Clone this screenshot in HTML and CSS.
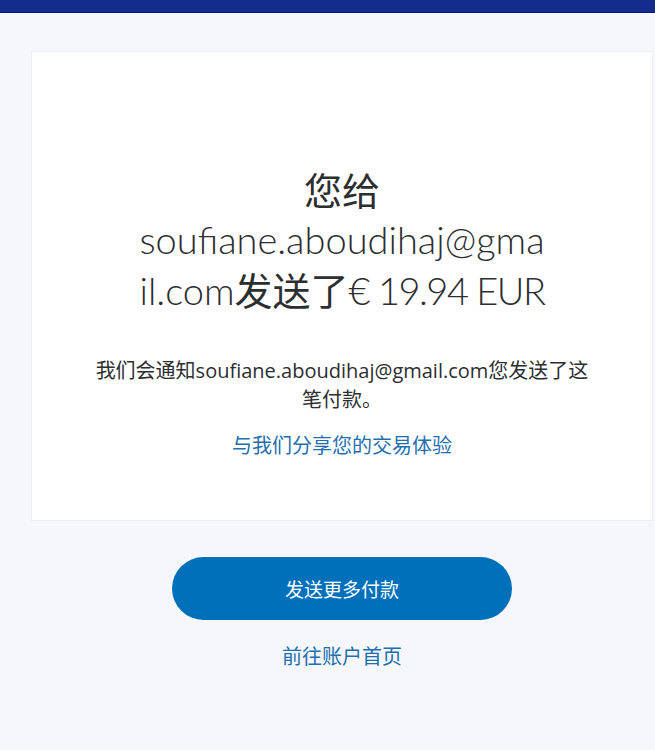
FILE: index.html
```html
<!DOCTYPE html>
<html lang="zh-CN">
<head>
<meta charset="utf-8">
<title>付款已发送</title>
<link rel="stylesheet" href="styles.css">
</head>
<body>
<header class="topbar"></header>
<main class="page">
  <section class="card">
    <h1 class="title"><span class="cjk">您给</span>soufiane.aboudihaj@gmail.com<span class="cjk">发送了</span><span class="amount">€ 19.94 EUR</span></h1>
    <p class="notice">我们会通知soufiane.aboudihaj@gmail.com您发送了这笔付款。</p>
    <a class="share" href="#">与我们分享您的交易体验</a>
  </section>
  <div class="actions">
    <a class="btn" href="#">发送更多付款</a>
    <a class="home" href="#">前往账户首页</a>
  </div>
</main>
</body>
</html>
```
FILE: styles.css
```css
* { box-sizing: border-box; }
html, body { margin: 0; padding: 0; }
body {
  background: #f5f7fa;
  font-family: "Open Sans", "Noto Sans CJK SC", sans-serif;
  color: #2c2e2f;
  width: 655px;
  height: 750px;
  overflow: hidden;
}
.topbar {
  height: 13px;
  background: #142c8e;
  border-bottom: 1px solid #0d1f6a;
}
.page {
  padding: 38px 2px 0 31px;
}
.card {
  background: #ffffff;
  border: 1px solid #eceef0;
  height: 470px;
  display: flex;
  flex-direction: column;
  align-items: center;
  padding-top: 112px;
}
.title {
  margin: 0;
  width: 409px;
  font-family: "Lato", "Noto Sans CJK SC", sans-serif;
  font-size: 38px;
  line-height: 49px;
  font-weight: 300;
  text-align: center;
  overflow-wrap: anywhere;
  color: #2c2e2f;
}
.cjk {
  font-family: "Noto Sans CJK SC", sans-serif;
  font-weight: 400;
}
.amount {
  letter-spacing: -1.5px;
}
.notice {
  margin: 41px 0 0;
  width: 496px;
  font-size: 20px;
  line-height: 29px;
  text-align: center;
}
.share {
  margin-top: 18px;
  font-size: 20px;
  line-height: 28px;
  color: #1f6fae;
  text-decoration: none;
}
.actions {
  display: flex;
  flex-direction: column;
  align-items: center;
  padding-top: 36px;
}
.btn {
  width: 340px;
  height: 63px;
  border-radius: 32px;
  background: #0070ba;
  color: #ffffff;
  font-size: 19px;
  display: flex;
  align-items: center;
  justify-content: center;
  text-decoration: none;
}
.home {
  margin-top: 23px;
  font-size: 20px;
  line-height: 28px;
  color: #1f6fae;
  text-decoration: none;
}
```
